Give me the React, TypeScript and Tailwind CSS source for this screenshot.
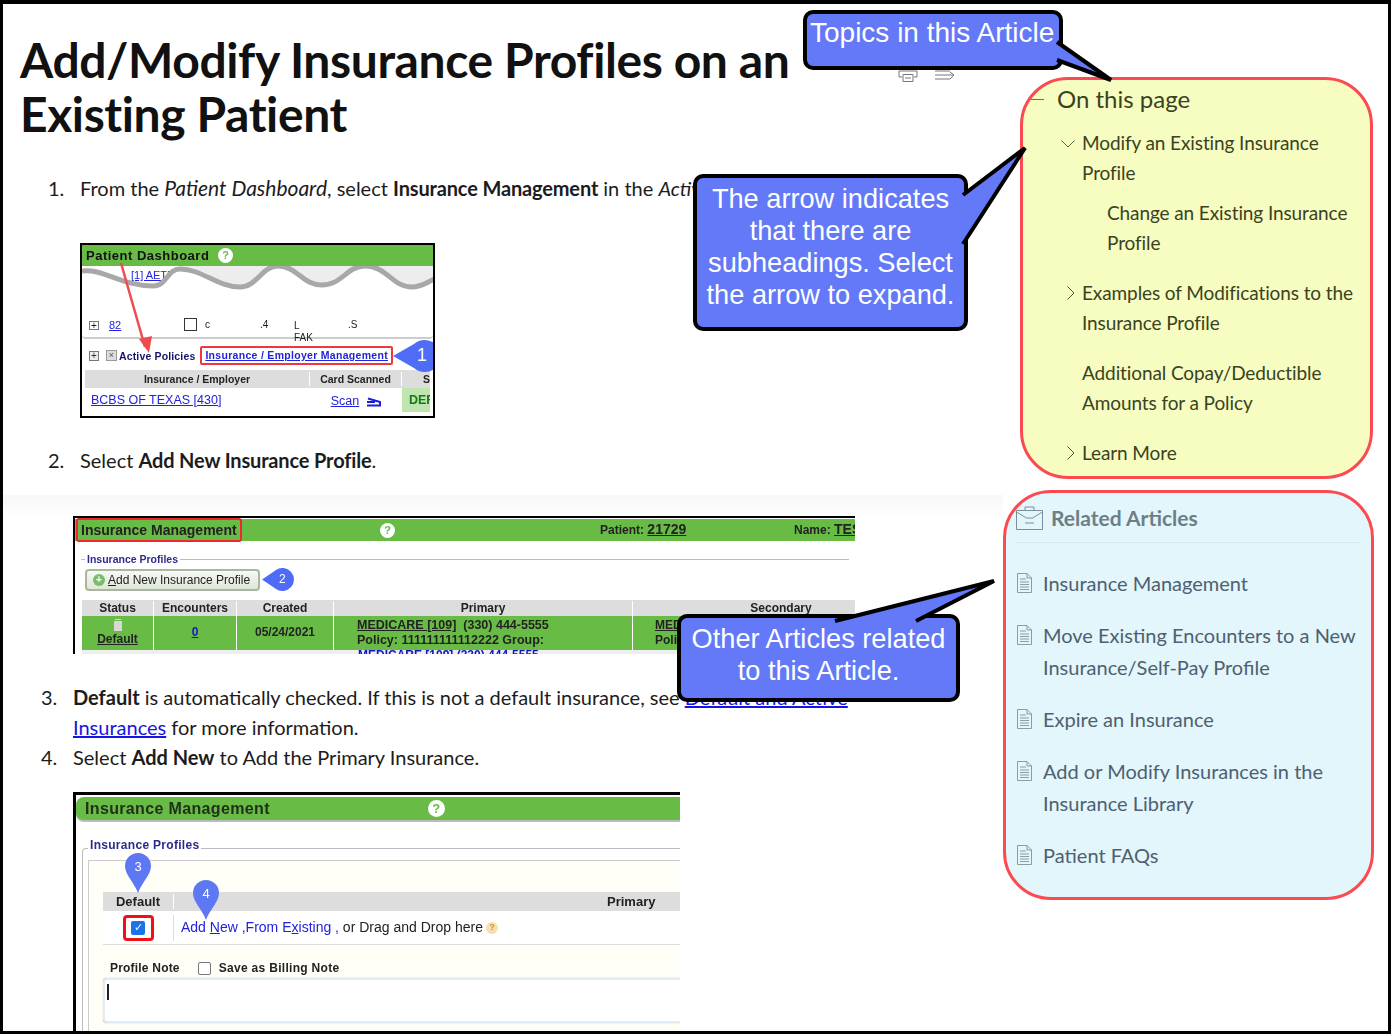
import React, { type ReactElement, type ReactNode } from 'react';

function HelpDot({ size = 'w-[15px] h-[15px] text-[11px]' }: { size?: string }): ReactElement {
  return (
    <span className={`${size} flex items-center justify-center rounded-full bg-white font-bold leading-none text-[#68bb45]`}>?</span>
  );
}

function DocIcon(): ReactElement {
  return (
    <svg className="mt-[6px] shrink-0" width="15" height="20" viewBox="0 0 15 20" fill="none" stroke="#8b9ba3">
      <path d="M1 .5h9l4.500 4.500v14.500H.5V.5z" />
      <path d="M10 .5V5h4.500M3 6h6M3 9h9M3 11.500h9M3 14h9M3 16.500h9" />
    </svg>
  );
}

function Pin({ n, className }: { n: string; className: string }): ReactElement {
  return (
    <div className={`absolute ${className}`}>
      <svg width="26" height="40" viewBox="0 0 26 40">
        <path d="M13 40C9 29 0 22 0 13a13 13 0 0 1 26 0c0 9-9 16-13 27z" fill="#5d78f2" />
      </svg>
      <span className="absolute inset-x-0 top-[6px] text-center text-[13px] leading-[16px] text-white">{n}</span>
    </div>
  );
}

const waveLine =
  'C20 2 40 20 71 20C85 20 85 3 98 3C120 3 135 21 158 21C175 21 180 0 196 0C215 0 220 19 240 19C260 19 265 0 283 0C305 0 310 21 330 21C340 21 345 16 353 13';

function PatientDashboardShot(): ReactElement {
  return (
    <div className="relative ml-[80px] flex h-[175px] w-[355px] flex-col overflow-hidden border-2 border-black bg-white font-['Liberation_Sans',sans-serif] text-[11px] leading-[14px] blur-[0.2px]">
      <div className="flex h-[21px] shrink-0 items-center gap-[9px] bg-[#68bb45] px-[4px] text-[13px] font-bold tracking-[0.5px] text-[#111]">
        Patient Dashboard
        <HelpDot />
      </div>
      <div className="relative h-[50px] shrink-0">
        <svg className="absolute left-0 top-0" width="353" height="30" viewBox="0 0 353 30">
          <rect x="98" width="255" height="24" fill="#ededed" />
        </svg>
        <span className="absolute left-[49px] top-[2px] text-[11px] text-[#2222dd] underline">[1] AETNA</span>
        <svg className="absolute left-0 top-0" width="353" height="40" viewBox="0 0 353 40">
          <path d={`M0 5${waveLine}V40H0z`} fill="#fff" />
          <path d={`M0 5${waveLine}`} fill="none" stroke="#a8a8a8" strokeWidth="5" />
        </svg>
      </div>
      <div className="flex h-[23px] shrink-0 items-start rounded-b-[4px] border-b-2 border-[#ccc] pl-[7px] pt-[4px] text-[10px]">
        <span className="mt-[1px] flex h-[9px] w-[10px] items-center justify-center border border-[#777] text-[10px] leading-none">+</span>
        <span className="ml-[10px] w-[75px] text-[11px] leading-[10px] text-[#2222dd] underline">82</span>
        <span className="mt-[-2px] h-[13px] w-[13px] border border-[#333]" />
        <span className="ml-[8px] w-[55px] leading-[10px]">c</span>
        <span className="w-[34px] leading-[10px]">.4</span>
        <span className="w-[54px] leading-[12px]">L<br />FAK</span>
        <span className="leading-[10px]">.S</span>
      </div>
      <div className="flex h-[31px] shrink-0 items-center pl-[7px] pt-[2px] text-[10.500px] font-bold text-[#13136b]">
        <span className="flex h-[10px] w-[10px] items-center justify-center border border-[#777] bg-[#eee] text-[10px] font-normal leading-none text-[#333]">+</span>
        <span className="ml-[7px] flex h-[11px] w-[11px] items-center justify-center border border-[#999] bg-[#ddd] text-[9px] font-normal leading-none text-[#555]">×</span>
        <span className="ml-[2px] tracking-[0.15px]">Active Policies</span>
        <span className="ml-[5px] rounded-[2px] border-2 border-[#f0373c] px-[3px] text-[10.500px] leading-[15px] tracking-[0.3px] text-[#2222dd] underline">Insurance / Employer Management</span>
      </div>
      <div className="mx-[3px] flex h-[18px] shrink-0 items-center bg-[#ddd] text-center text-[10.500px] font-bold text-[#222]">
        <span className="w-[225px] border-r border-white">Insurance / Employer</span>
        <span className="w-[92px] border-r border-white">Card Scanned</span>
        <span className="flex-1 overflow-hidden whitespace-nowrap pl-[21px] text-left">St</span>
      </div>
      <div className="mx-[3px] flex h-[24px] shrink-0 text-[12.500px] text-[#2222dd]">
        <span className="w-[225px] pl-[6px] pt-[5px] underline">BCBS OF TEXAS [430]</span>
        <span className="flex w-[92px] items-start justify-center gap-[7px] pt-[6px]">
          <span className="underline">Scan</span>
          <svg className="mt-[2px]" width="15" height="11" viewBox="0 0 15 11" fill="none" stroke="#1c1cd8" strokeWidth="2">
            <path d="M1 9.500h13V6L2 2.500M1 6h8" />
          </svg>
        </span>
        <span className="flex-1 overflow-hidden whitespace-nowrap bg-[#c1e5b0] pl-[7px] pt-[5px] font-bold text-[#157a15]">DEF</span>
      </div>
      <svg className="absolute left-0 top-0" width="351" height="130" viewBox="0 0 351 130">
        <path d="M39 18l24 84" stroke="#f04b4f" strokeWidth="2.500" />
        <path d="M57 94l10 14 3-17z" fill="#f04b4f" />
        <path d="M311 111L332 99a16 16 0 1 1 0 24z" fill="#4e6cf5" />
      </svg>
      <span className="absolute left-[335px] top-[98px] text-[18px] leading-[24px] text-white">1</span>
    </div>
  );
}

function InsuranceTableShot(): ReactElement {
  const cell = 'shrink-0 border-r border-white text-center';
  return (
    <div className="relative ml-[73px] h-[138px] w-[782px] overflow-hidden border-l-2 border-t-2 border-black bg-white font-['Liberation_Sans',sans-serif] text-[12px] leading-[15px] text-[#222] blur-[0.2px]">
      <div className="mt-[1px] flex h-[22px] items-center justify-between bg-[#68bb45] font-bold">
        <span className="ml-[1px] rounded-[3px] border-2 border-[#f0282e] px-[3px] text-[14px] leading-[20px]">Insurance Management</span>
        <span className="absolute left-[305px]"><HelpDot /></span>
        <span className="absolute left-[525px]">Patient: <span className="text-[14px] underline">21729</span></span>
        <span className="absolute left-[719px] whitespace-nowrap">Name: <span className="text-[14px] underline">TEST</span></span>
      </div>
      <div className="relative mx-[6px] mt-[18px] h-[41px] border-t border-[#bbb]">
        <span className="absolute left-[4px] top-[-7px] bg-white px-[2px] text-[10.500px] leading-[12px] font-bold text-[#2b2b8c]">Insurance Profiles</span>
        <div className="absolute left-[4px] top-[9px] flex h-[22px] w-[175px] items-center gap-[3px] rounded-[4px] border-2 border-[#a9b7a0] bg-gradient-to-b from-[#f7f9f4] to-[#dfe6d9] pl-[6px] text-[12px]">
          <span className="flex h-[12px] w-[12px] items-center justify-center rounded-full bg-[#7dbb6e] text-[10px] font-bold leading-none text-white">+</span>
          <span><span className="underline">A</span>dd New Insurance Profile</span>
        </div>
        <svg className="absolute left-[181px] top-[8px]" width="34" height="23" viewBox="0 0 34 23">
          <path d="M0 11.500L14 2a11.500 11.500 0 1 1 0 19z" fill="#4e6cf5" />
        </svg>
        <span className="absolute left-[198px] top-[12px] text-[12px] text-white">2</span>
      </div>
      <div className="ml-[7px] flex h-[16px] items-center bg-[#ddd] font-bold">
        <span className={`w-[72px] ${cell}`}>Status</span>
        <span className={`w-[83px] ${cell}`}>Encounters</span>
        <span className={`w-[97px] ${cell}`}>Created</span>
        <span className={`w-[299px] ${cell}`}>Primary</span>
        <span className="w-[296px] shrink-0 text-center">Secondary</span>
      </div>
      <div className="ml-[7px] flex h-[34px] bg-[#68bb45]">
        <span className={`flex w-[72px] flex-col items-center ${cell}`}>
          <svg className="mt-[1px]" width="10" height="14" viewBox="0 0 10 14" fill="#d8d8d8"><path d="M2 2h6v1H2zM1 4h8v10H1z" /></svg>
          <span className="mt-[1px] font-bold underline">Default</span>
        </span>
        <span className={`w-[83px] pt-[9px] font-bold text-[#1515c8] underline ${cell}`}>0</span>
        <span className={`w-[97px] pt-[9px] font-bold ${cell}`}>05/24/2021</span>
        <span className="w-[299px] shrink-0 border-r border-white pl-[23px] pt-[2px] text-[12.500px] font-bold leading-[15px]">
          <span className="underline">MEDICARE [109]</span>&nbsp; (330) 444-5555<br />Policy: 111111111112222 Group:
        </span>
        <span className="flex-1 overflow-hidden whitespace-nowrap pl-[22px] pt-[2px] font-bold leading-[15px]"><span className="underline">MEDICARE</span><br />Policy</span>
      </div>
      <div className="ml-[7px] bg-[#eee] pl-[276px] text-[12px] font-bold leading-[11px] text-[#1515c8] underline">MEDICARE [109] (330) 444-5555</div>
    </div>
  );
}

function InsuranceAddShot(): ReactElement {
  return (
    <div className="relative ml-[73px] h-[242px] w-[607px] overflow-hidden border-l-[3px] border-t-[3px] border-black bg-white font-['Liberation_Sans',sans-serif] text-[13px] leading-[15px] text-[#222] blur-[0.2px]">
      <div className="mt-[2px] flex h-[25px] items-center rounded-l-[8px] border-b-2 border-[#bbb] bg-[#68bb45] pl-[9px] text-[16px] font-bold tracking-[0.35px] text-[#20301c]">
        Insurance Management
        <span className="absolute left-[352px]"><HelpDot size="h-[17px] w-[17px] text-[13px]" /></span>
      </div>
      <div className="relative ml-[6px] mt-[26px] h-[200px] rounded-tl-[4px] border-l border-t border-[#bbb]">
        <span className="absolute left-[5px] top-[-11px] bg-white px-[2px] text-[12px] font-bold tracking-[0.3px] text-[#2b2b8c]">Insurance Profiles</span>
        <div className="ml-[5px] mt-[11px] h-full border-l border-t border-[#ccc] bg-[#fffff7] pl-[14px] pt-[31px]">
          <div className="flex h-[19px] items-center bg-[#ddd] font-bold">
            <span className="w-[71px] border-r border-white text-center">Default</span>
            <span className="pl-[433px]">Primary</span>
          </div>
          <div className="flex h-[34px] items-center border-b border-[#ddd] bg-white">
            <span className="flex w-[71px] justify-center border-r border-[#ddd]">
              <span className="flex h-[26px] w-[31px] items-center justify-center rounded-[4px] border-[3px] border-[#f0101a]">
                <span className="flex h-[14px] w-[14px] items-center justify-center rounded-[2px] bg-[#1a73e8] text-[11px] leading-none text-white">✓</span>
              </span>
            </span>
            <span className="ml-[7px] whitespace-nowrap text-[14px]">
              <span className="text-[#2222dd]">Add <span className="underline">N</span>ew ,From E<span className="underline">x</span>isting ,</span> or Drag and Drop here
            </span>
            <span className="ml-[3px] flex h-[12px] w-[12px] items-center justify-center rounded-full bg-[#f8dfb0] text-[9px] font-bold text-[#d98a2b]">?</span>
          </div>
          <div className="mt-[16px] flex items-center text-[12px] font-bold">
            <span className="ml-[7px] tracking-[0.2px]">Profile Note</span>
            <span className="ml-[18px] h-[13px] w-[13px] rounded-[2px] border border-[#777] bg-white" />
            <span className="ml-[8px] tracking-[0.3px]">Save as Billing Note</span>
          </div>
          <div className="mt-[2px] h-[45px] rounded-l-[4px] border-2 border-r-0 border-[#e2ecf7] bg-white pl-[2px] pt-[4px] shadow-[0_0_1px_#888]">
            <div className="h-[16px] w-[1.500px] bg-[#222]" />
          </div>
        </div>
      </div>
      <Pin n="3" className="left-[49px] top-[58px]" />
      <Pin n="4" className="left-[117px] top-[85px]" />
    </div>
  );
}

function Step({ n, left, children }: { n: string; left: string; children: ReactNode }): ReactElement {
  return (
    <div className={`flex ${left}`}>
      <span className="w-[32px] shrink-0">{n}</span>
      <div>{children}</div>
    </div>
  );
}

function Callout({ className, children }: { className: string; children: ReactNode }): ReactElement {
  return (
    <div className={`absolute z-20 rounded-[10px] border-4 border-black bg-[#6379f8] text-center font-['Liberation_Sans',sans-serif] text-[27.200px] leading-[32px] text-white ${className}`}>
      {children}
    </div>
  );
}

function TocRow({ icon, className, children }: { icon?: 'down' | 'right'; className: string; children: ReactNode }): ReactElement {
  return (
    <div className={`relative ${className}`}>
      {icon === 'down' && (
        <svg className="absolute left-[-21px] top-[12px]" width="14" height="8" viewBox="0 0 14 8" fill="none" stroke="#5f6845">
          <path d="M.5.500L7 7l6.500-6.500" />
        </svg>
      )}
      {icon === 'right' && (
        <svg className="absolute left-[-15px] top-[8px]" width="8" height="14" viewBox="0 0 8 14" fill="none" stroke="#4f5638">
          <path d="M.5.500L7 7 .5 13.500" />
        </svg>
      )}
      {children}
    </div>
  );
}

const related: string[] = [
  'Insurance Management',
  'Move Existing Encounters to a New Insurance/Self-Pay Profile',
  'Expire an Insurance',
  'Add or Modify Insurances in the Insurance Library',
  'Patient FAQs',
];

export default function App(): ReactElement {
  return (
    <div className="relative flex h-[1034px] w-[1391px] overflow-hidden bg-white font-['Lato',sans-serif] text-[20px] leading-[30px] text-[#1c1c1c]">
      {/* page frame from the captured image */}
      <div className="pointer-events-none absolute inset-0 z-30 border-b-[3px] border-l-[3px] border-r-[3px] border-t-4 border-black" />
      <div className="absolute left-[3px] top-[495px] h-[24px] w-[1000px] bg-gradient-to-b from-[#f8f8f8] to-white" />

      <main className="w-[1003px] shrink-0 pt-[33px]">
        <h1 className="relative ml-[20px] w-[790px] text-[48px] font-bold leading-[54px] tracking-[-0.4px] text-[#111]">
          Add/Modify Insurance Profiles on an Existing Patient
        </h1>
        <div className="relative mt-[32px]">
          <Step n="1." left="ml-[48px]">
            <span className="whitespace-nowrap">From the <em className="text-[21px]">Patient Dashboard</em>, select <b className="tracking-[-0.15px]">Insurance Management</b> in the <em>Active Policies</em> section.</span>
          </Step>
        </div>
        <div className="mt-[40px]"><PatientDashboardShot /></div>
        <div className="relative mt-[27px]">
          <Step n="2." left="ml-[48px]">Select <b className="tracking-[-0.15px]">Add New Insurance Profile</b>.</Step>
        </div>
        <div className="mt-[41px]"><InsuranceTableShot /></div>
        <div className="relative mt-[28px]">
          <Step n="3." left="ml-[41px]">
            <div className="w-[780px]"><b>Default</b> is automatically checked. If this is not a default insurance, see <span className="text-[#1515e0] underline">Default and Active Insurances</span> for more information.</div>
          </Step>
          <Step n="4." left="ml-[41px]">Select <b>Add New</b> to Add the Primary Insurance.</Step>
        </div>
        <div className="mt-[20px]"><InsuranceAddShot /></div>
      </main>

      <aside className="flex-1 pt-[77px]">
        <div className="ml-[17px] h-[402px] w-[353px] rounded-[48px] border-[3px] border-[#fb4a50] bg-[#f7fcc0] text-[19px] tracking-[-0.1px] text-[#39431f]">
          <div className="relative mt-[4px] pl-[34px] text-[24px] tracking-normal">
            <span className="absolute left-[8px] top-[15px] h-[1px] w-[13px] bg-[#6b7350]" />
            On this page
          </div>
          <div className="mt-[14px] flex flex-col">
            <TocRow icon="down" className="ml-[59px]">Modify an Existing Insurance<br />Profile</TocRow>
            <TocRow className="ml-[84px] mt-[10px]">Change an Existing Insurance<br />Profile</TocRow>
            <TocRow icon="right" className="ml-[59px] mt-[20px]">Examples of Modifications to the<br />Insurance Profile</TocRow>
            <TocRow className="ml-[59px] mt-[20px]">Additional Copay/Deductible<br />Amounts for a Policy</TocRow>
            <TocRow icon="right" className="ml-[59px] mt-[20px]">Learn More</TocRow>
          </div>
        </div>
        <div className="mt-[11px] h-[410px] w-[371px] rounded-[48px] border-[3px] border-[#fb4a50] bg-[#e2f6fb] px-[11px] text-[#4f6070]">
          <div className="flex h-[50px] items-center gap-[8px] border-b border-[#d5e8ee] text-[21px] font-bold text-[#6c7f87]">
            <svg className="ml-[-1px]" width="27" height="24" viewBox="0 0 27 24" fill="none" stroke="#7b8f98">
              <path d="M9 4V1h9v3M.5 4.500h26v19H.500zM.5 6l10 6h6l10-6M9 17h9" />
            </svg>
            Related Articles
          </div>
          <div className="mt-[24px] flex flex-col gap-[20px]">
            {related.map((title) => (
              <div className="flex gap-[11px] text-[20px] leading-[32px]" key={title}>
                <DocIcon />
                <span>{title}</span>
              </div>
            ))}
          </div>
        </div>
      </aside>

      <svg className="absolute left-[898px] top-[68px]" width="62" height="16" viewBox="0 0 62 16" fill="none" stroke="#777">
        <path d="M4 9H1V3h18v6h-3M5 6.500h10v7H5zM7 10h6M37 3h15M37 7h19l-4-3M37 11h15l4-4" />
      </svg>

      <Callout className="left-[803px] top-[10px] h-[60px] w-[260px] whitespace-nowrap pl-[3px] pt-[3px] text-left">
        <span className="text-[28px]">Topics in this Article</span>
      </Callout>
      <svg className="absolute left-[1050px] top-[36px] z-20" width="70" height="50" viewBox="0 0 70 50">
        <path d="M7 6L61 44L7 24" fill="#6379f8" stroke="#000" strokeWidth="4" strokeLinejoin="miter" />
      </svg>

      <Callout className="left-[693px] top-[174px] h-[157px] w-[275px] pt-[5px]">The arrow indicates that there are subheadings. Select the arrow to expand.</Callout>
      <svg className="absolute left-[955px] top-[140px] z-20" width="80" height="110" viewBox="0 0 80 110">
        <path d="M8 55L70 8L8 104" fill="#6379f8" stroke="#000" strokeWidth="4" />
      </svg>

      <Callout className="left-[677px] top-[614px] h-[88px] w-[283px] pt-[5px]">Other Articles related to this Article.</Callout>
      <svg className="absolute left-[830px] top-[575px] z-20" width="170" height="50" viewBox="0 0 170 50">
        <path d="M5 46L164 6L86 46" fill="#6379f8" stroke="#000" strokeWidth="4" />
      </svg>
    </div>
  );
}
